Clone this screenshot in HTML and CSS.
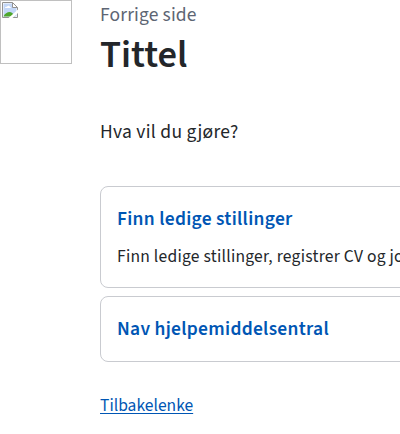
FILE: index.html
```html
<!DOCTYPE html>
<html lang="no">
<head>
<meta charset="utf-8">
<title>Tittel</title>
<link rel="stylesheet" href="styles.css">
</head>
<body>
<div class="page">
  <div class="pictogram">
    <svg width="16" height="16" viewBox="0 0 16 16" aria-hidden="true">
      <path d="M.5.5h10l5 5v10H.5z" fill="#fff"/>
      <path d="M1.500 1.500h9v4h4v9h-13z" fill="#c3d7f8"/>
      <path d="M3 6c0-1 1-1.500 2-1.200C5.500 3.500 7.500 3.500 8 5c1 0 1 1 1 1z" fill="#fff"/>
      <path d="M1.500 14.500c1-3 4-4.500 6-4.500s3.500 1 5 4.500z" fill="#4ea72c"/>
      <path d="M15.500 5.500v10H.5V.5h10l5 5h-5v-5" fill="none" stroke="#929292"/>
      <path d="M6.500 16 16 7.500V11l-5.500 5z" fill="#fff"/>
    </svg>
  </div>
  <main class="content">
    <p class="previous">Forrige side</p>
    <h1 class="title">Tittel</h1>
    <p class="question">Hva vil du gjøre?</p>
    <div class="cards">
      <a class="card" href="#">
        <span class="card-title">Finn ledige stillinger</span>
        <span class="card-text">Finn ledige stillinger, registrer CV og jobbønsker</span>
      </a>
      <a class="card" href="#">
        <span class="card-title">Nav hjelpemiddelsentral</span>
      </a>
    </div>
    <a class="back" href="#">Tilbakelenke</a>
  </main>
</div>
</body>
</html>
```
FILE: styles.css
```css
* { box-sizing: border-box; }
body {
  margin: 0;
  overflow: hidden;
  background: #fff;
  color: #23262a;
  font-family: "Source Sans 3", "Noto Sans CJK SC", sans-serif;
}
.page { display: flex; gap: 28px; width: 700px; }
.pictogram {
  flex: none;
  width: 72px;
  height: 64px;
  border: 1px solid #c0c0c0;
  padding: 1px;
}
.pictogram svg { display: block; }
.content { flex: 1; }
p, h1 { margin: 0; }
.previous { padding-top: 1px; font-size: 19.5px; line-height: 28px; letter-spacing: .15px; color: #5d6573; }
.title { font-size: 38.5px; line-height: 52px; font-weight: 600; }
.question { margin-top: 37px; font-size: 19.5px; line-height: 28px; letter-spacing: .3px; }
.cards { display: flex; flex-direction: column; gap: 8px; margin-top: 40px; }
.card {
  display: flex;
  flex-direction: column;
  gap: 10px;
  padding: 18px 16px 17px;
  border: 1px solid #c9cbd0;
  border-radius: 8px;
  color: inherit;
  text-decoration: none;
  white-space: nowrap;
}
.card-title { font-size: 19.5px; line-height: 29px; font-weight: 600; letter-spacing: .28px; color: #0056b4; }
.card-text { font-size: 17.5px; line-height: 26px; letter-spacing: .25px; }
.back {
  display: inline-block;
  margin-top: 31px;
  font-size: 17.5px;
  line-height: 26px;
  color: #0056b4;
  text-decoration: underline;
  text-decoration-thickness: 1px;
  text-underline-offset: 2px;
}
```
